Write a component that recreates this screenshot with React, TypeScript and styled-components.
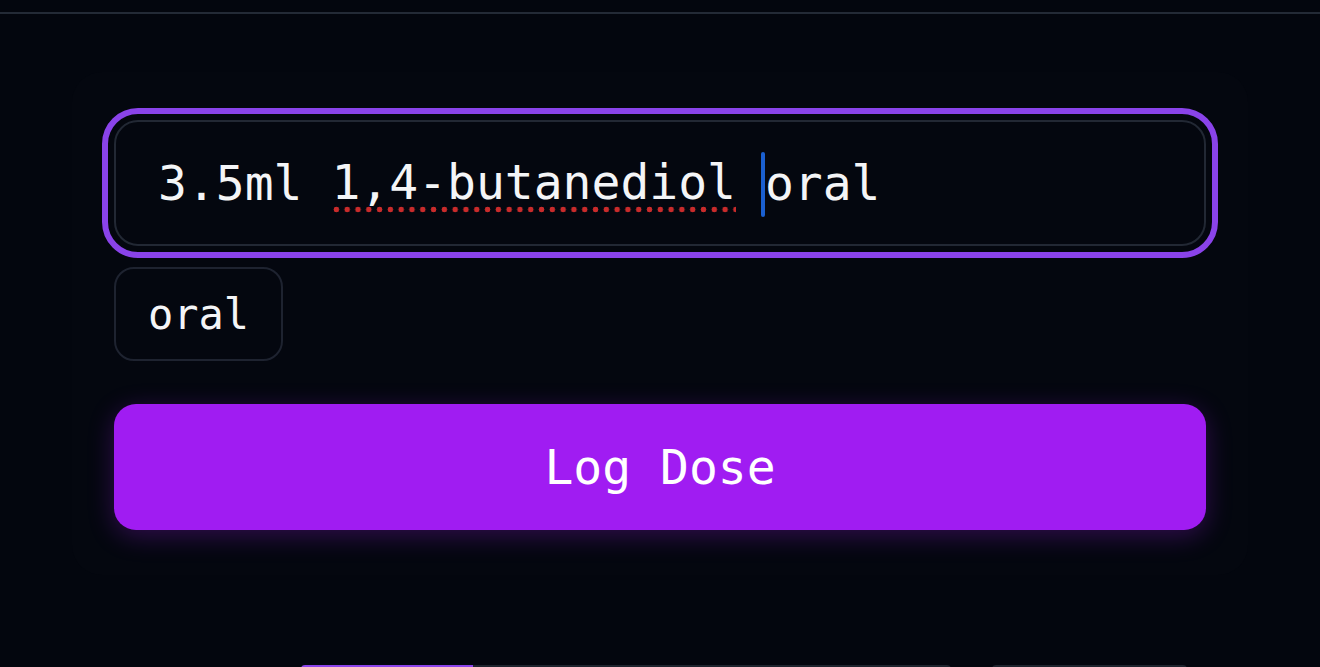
import React from "react";
import styled, { createGlobalStyle } from "styled-components";

const Global = createGlobalStyle`
  html, body {
    margin: 0;
    padding: 0;
    background: #03060e;
    height: 100%;
    overflow: hidden;
  }
  #root { height: 100%; }
`;

const Page = styled.div`
  height: 100vh;
  display: flex;
  flex-direction: column;
  background: #03060e;
  font-family: "DejaVu Sans Mono", "Liberation Mono", monospace;
  color: #f4f5f7;
`;

const Header = styled.header`
  height: 12px;
  flex: none;
  border-bottom: 2px solid #232a36;
`;

const Main = styled.main`
  flex: 1;
  display: flex;
  flex-direction: column;
  padding: 58px 72px 0;
`;

const Card = styled.section`
  background: #04070f;
  border-radius: 30px;
  padding: 48px 42px 45px;
  display: flex;
  flex-direction: column;
`;

const InputBox = styled.div`
  height: 126px;
  box-sizing: border-box;
  border: 2px solid #222834;
  border-radius: 24px;
  outline: 6px solid #8a43ea;
  outline-offset: 6px;
  display: flex;
  align-items: center;
  padding: 6px 42px 0;
  font-size: 48px;
`;

const InputText = styled.span`
  white-space: pre;
`;

const Misspelled = styled.span`
  padding-bottom: 4px;
  background-image: radial-gradient(circle, #c92b2b 2.6px, transparent 3.1px);
  background-size: 10.8px 7px;
  background-repeat: repeat-x;
  background-position: 0 calc(100% - 1px);
`;

const Caret = styled.span`
  display: inline-block;
  width: 4px;
  height: 65px;
  margin-left: -4px;
  background: #1a5fd0;
  border-radius: 2px;
  vertical-align: middle;
  position: relative;
  top: -2px;
`;

const ChipRow = styled.div`
  display: flex;
  gap: 12px;
  margin-top: 21px;
`;

const Chip = styled.button`
  height: 94px;
  box-sizing: border-box;
  border: 2px solid #1e2330;
  border-radius: 20px;
  background: transparent;
  color: #f4f5f7;
  font-family: "DejaVu Sans Mono", "Liberation Mono", monospace;
  font-size: 42px;
  padding: 0 32px;
`;

const SubmitButton = styled.button`
  margin-top: 43px;
  height: 126px;
  border: none;
  border-radius: 22px;
  background: #a01cf2;
  color: #ffffff;
  font-family: "DejaVu Sans Mono", "Liberation Mono", monospace;
  font-size: 48px;
  box-shadow: 0 6px 26px rgba(160, 28, 242, 0.28);
`;

const BottomBar = styled.div`
  margin-top: auto;
  display: flex;
  gap: 41px;
  padding-left: 301px;
  height: 2px;
  flex: none;
`;

const Track = styled.div<{ $w: number }>`
  width: ${(p) => p.$w}px;
  height: 8px;
  background: #1e242e;
  border-radius: 4px 4px 0 0;
  display: flex;
  overflow: hidden;
`;

const Fill = styled.div`
  background: #8a43ea;
  height: 100%;
`;

export default function App() {
  return (
    <>
      <Global />
      <Page>
        <Header />
        <Main>
          <Card>
            <InputBox>
              <InputText>
                {"3.5ml "}
                <Misspelled>1,4-butanediol</Misspelled>
                {" "}
                <Caret />
                {"oral"}
              </InputText>
            </InputBox>
            <ChipRow>
              <Chip>oral</Chip>
            </ChipRow>
            <SubmitButton>Log Dose</SubmitButton>
          </Card>
        </Main>
        <BottomBar>
          <Track $w={650}>
            <Fill style={{ width: "172px" }} />
          </Track>
          <Track $w={195} />
        </BottomBar>
      </Page>
    </>
  );
}
